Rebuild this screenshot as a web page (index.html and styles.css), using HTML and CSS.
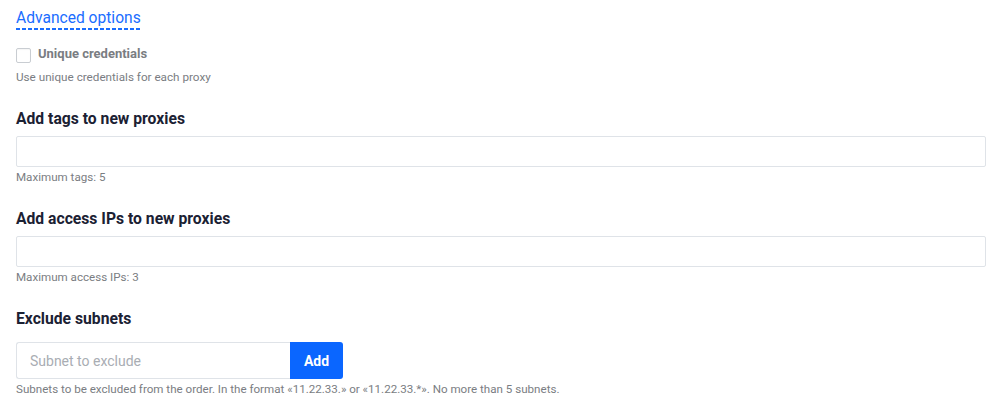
FILE: index.html
```html
<!DOCTYPE html>
<html lang="en">
<head>
<meta charset="utf-8">
<title>Advanced options</title>
<link rel="stylesheet" href="styles.css">
</head>
<body>
<div class="panel">
  <div class="toggle-row"><a class="toggle" href="#">Advanced options</a></div>

  <label class="check-row">
    <span class="checkbox"></span>
    <span class="check-label">Unique credentials</span>
  </label>
  <div class="desc">Use unique credentials for each proxy</div>

  <section class="field">
    <h3 class="field-title">Add tags to new proxies</h3>
    <input class="text-input" type="text">
    <div class="hint">Maximum tags: 5</div>
  </section>

  <section class="field">
    <h3 class="field-title">Add access IPs to new proxies</h3>
    <input class="text-input" type="text">
    <div class="hint">Maximum access IPs: 3</div>
  </section>

  <section class="field">
    <h3 class="field-title field-title--loose">Exclude subnets</h3>
    <div class="input-group">
      <input class="group-input" type="text" placeholder="Subnet to exclude">
      <button class="add-btn" type="button">Add</button>
    </div>
    <div class="hint">Subnets to be excluded from the order. In the format «11.22.33.» or «11.22.33.*». No more than 5 subnets.</div>
  </section>
</div>
</body>
</html>
```

FILE: styles.css
```css
* { box-sizing: border-box; }

html, body {
  margin: 0;
  padding: 0;
  background: #ffffff;
}

body {
  font-family: Roboto, "Noto Sans", "Liberation Sans", sans-serif;
  color: #1b2133;
}

.panel {
  width: 1000px;
  padding: 8px 14px 0 16px;
}

.toggle-row {
  height: 22px;
}

.toggle {
  display: inline-block;
  font-size: 15.6px;
  line-height: 20px;
  color: #1a6dff;
  text-decoration: none;
  padding-bottom: 2px;
  background-image: linear-gradient(to right, #1a6dff 4px, transparent 4px);
  background-size: 6px 2px;
  background-repeat: repeat-x;
  background-position: 0 100%;
}

.check-row {
  display: flex;
  align-items: center;
  gap: 7px;
  margin-top: 16px;
  height: 18px;
}

.checkbox {
  width: 15px;
  height: 15px;
  border: 1px solid #c9cdd2;
  border-radius: 2px;
  background: #fff;
  box-shadow: inset 0 1px 1px rgba(0, 0, 0, 0.04);
}

.check-label {
  font-size: 13px;
  font-weight: 700;
  color: #7a7d82;
  margin-top: -3px;
}

.desc {
  margin-top: 5px;
  font-size: 11.7px;
  line-height: 16px;
  color: #7a7d82;
}

.field {
  margin-top: 24px;
}

.field-title {
  margin: 0 0 7px;
  font-size: 15.7px;
  line-height: 20px;
  font-weight: 700;
  color: #1b2133;
}

.field-title--loose {
  margin-bottom: 13px;
}

.text-input {
  display: block;
  width: 100%;
  height: 31px;
  border: 1px solid #dfe3e8;
  border-radius: 2px;
  background: #fff;
  font: inherit;
  outline: none;
}

.hint {
  margin-top: 2px;
  font-size: 11.6px;
  line-height: 16px;
  color: #7a7d82;
}

.input-group {
  display: flex;
  height: 37px;
}

.group-input {
  width: 274px;
  height: 37px;
  border: 1px solid #dfe3e8;
  border-right: none;
  border-radius: 3px 0 0 3px;
  padding: 0 13px;
  font-family: inherit;
  font-size: 14px;
  color: #1b2133;
  outline: none;
}

.group-input::placeholder {
  color: #a9adb3;
}

.add-btn {
  width: 53px;
  height: 37px;
  border: none;
  border-radius: 0 3px 3px 0;
  background: #0a66ff;
  color: #fff;
  font-family: inherit;
  font-size: 14px;
  font-weight: 700;
  padding: 0;
}
```
